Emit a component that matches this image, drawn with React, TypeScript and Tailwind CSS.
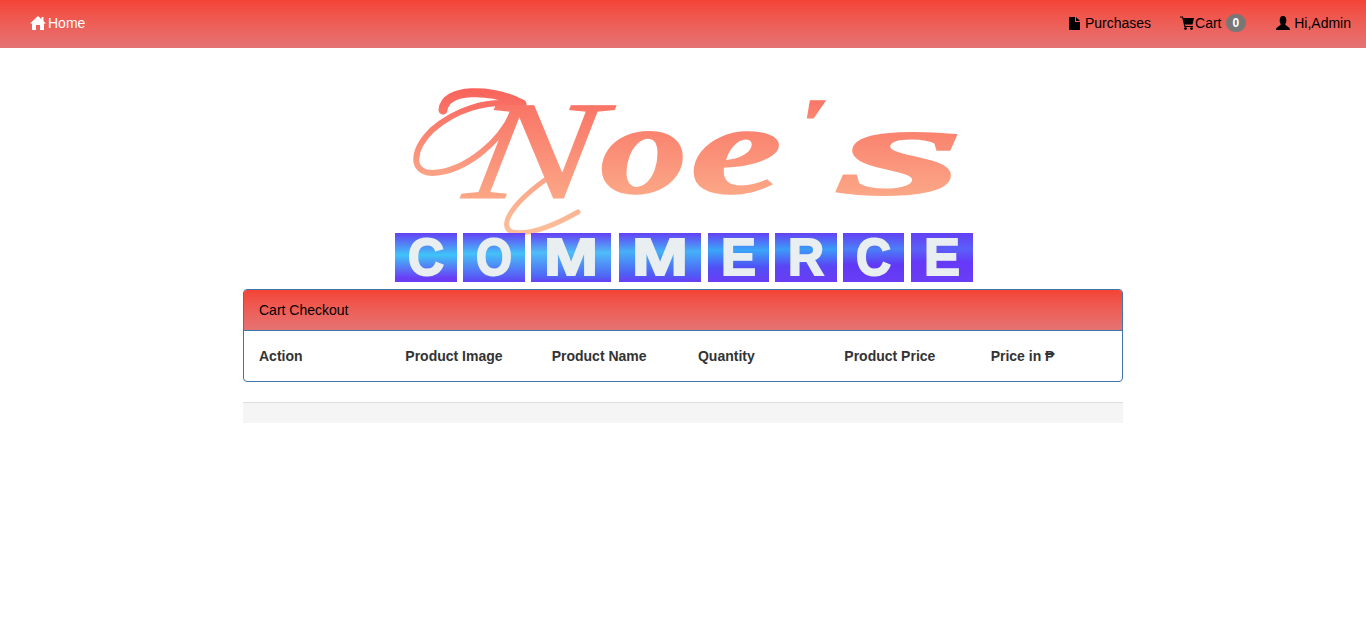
import React from "react";

const tiles = [
  { x: 395, w: 62, ch: "C", mid: "#3fc4f8", end: "#6a3df5", a: 0.45, b: 0.92 },
  { x: 463, w: 62, ch: "O", mid: "#45c0f8", end: "#5a50f5", a: 0.42, b: 0.95 },
  { x: 531, w: 80, ch: "M", mid: "#4fbdf8", end: "#4f62f5", a: 0.4, b: 0.9 },
  { x: 619, w: 82, ch: "M", mid: "#45b0f8", end: "#4f5cf5", a: 0.38, b: 0.85 },
  { x: 708, w: 61, ch: "E", mid: "#3aa6f8", end: "#5050f5", a: 0.35, b: 0.7 },
  { x: 775, w: 62, ch: "R", mid: "#3a9cf8", end: "#5a45f5", a: 0.33, b: 0.68 },
  { x: 843, w: 61, ch: "C", mid: "#4a80f8", end: "#6038f5", a: 0.33, b: 0.65 },
  { x: 911, w: 62, ch: "E", mid: "#5a60f8", end: "#6638f8", a: 0.33, b: 0.6 },
];

const Logo = () => (
  <svg viewBox="243 48 880 241" className="block w-[880px] h-[241px]">
    <defs>
      <linearGradient id="brush" x1="0" y1="0" x2="0" y2="1">
        <stop offset="0" stopColor="#f8645c" />
        <stop offset="1" stopColor="#fcb690" />
      </linearGradient>
      <linearGradient id="swash" gradientUnits="userSpaceOnUse" x1="0" y1="90" x2="0" y2="235">
        <stop offset="0" stopColor="#f8645c" />
        <stop offset="0.6" stopColor="#fba487" />
        <stop offset="1" stopColor="#fcc09a" />
      </linearGradient>
      {tiles.map((t, i) => (
        <linearGradient key={i} id={`tile${i}`} x1="0" y1="0" x2="0" y2="1">
          <stop offset="0" stopColor="#6440f5" />
          <stop offset={t.a} stopColor={t.mid} />
          <stop offset={t.b} stopColor={t.end} />
          <stop offset="1" stopColor="#6a3df5" />
        </linearGradient>
      ))}
    </defs>
    {/* flourishes around the script N */}
    <g fill="none" stroke="url(#swash)" strokeLinecap="round">
      <path d="M443 110C445 88 490 88 522 104" strokeWidth="9" />
      <path d="M516 104C505 140 465 172 432 173C410 172 412 150 432 130C455 110 485 100 516 104" strokeWidth="6" />
      <path d="M578 212C555 225 530 236 512 232C498 226 512 204 545 180" strokeWidth="5" />
    </g>
    <g fontFamily='"Liberation Serif", serif' fontStyle="italic" fontWeight="400" fill="url(#brush)" stroke="url(#brush)" strokeWidth="1.5">
      <text x="0" y="0" fontSize="176" transform="translate(462 198) skewX(-8) scale(1.12 0.8)">N</text>
      <text x="0" y="0" fontSize="130" fontWeight="700" transform="translate(600 193) scale(1.35 1)">o</text>
      <text x="0" y="0" fontSize="130" fontWeight="700" transform="translate(690 193) scale(1.6 1)">e</text>
      <text x="0" y="0" fontSize="72" fontWeight="700" transform="translate(788 148) skewX(-8) scale(1.6 1)">'</text>
      <text x="0" y="0" fontSize="130" fontWeight="700" transform="translate(839 194) scale(2.5 1)">s</text>
    </g>
    {tiles.map((t, i) => (
      <g key={i}>
        <rect x={t.x} y="233" width={t.w} height="49" fill={`url(#tile${i})`} />
        <text
          x={t.x + 13}
          y="275"
          textLength={t.w - 26}
          lengthAdjust="spacingAndGlyphs"
          fontSize="51"
          fontWeight="700"
          fontFamily='"Liberation Sans", sans-serif'
          fill="#e9eef0"
          stroke="#e9eef0"
          strokeWidth="2"
        >
          {t.ch}
        </text>
      </g>
    ))}
  </svg>
);

const HomeIcon = () => (
  <svg viewBox="0 0 16 14" className="mr-0.5 h-[14px] w-4 fill-current">
    <path d="M8 0 11.5 3.2V1H13.5V5L16 7.5H14V14H10V9H6V14H2V7.5H0Z" />
  </svg>
);

const FileIcon = () => (
  <svg viewBox="0 0 11 13" className="mr-[5px] h-[13px] w-[11px] fill-current">
    <path d="M0 0H6V5H11V13H0ZM7 0 11 4H7Z" />
  </svg>
);

const CartIcon = () => (
  <svg viewBox="0 0 14 14" className="mr-px h-[14px] w-[14px] fill-current">
    <path d="M0 .5H3L3.4 2H14L12.5 8.5H5L5.4 10H13V11H4.4L2.2 1.5H0Z" />
    <circle cx="5.5" cy="12.6" r="1.4" />
    <circle cx="11.5" cy="12.6" r="1.4" />
  </svg>
);

const UserIcon = () => (
  <svg viewBox="0 0 14 14" className="mr-1 h-[14px] w-[14px] fill-current">
    <ellipse cx="7" cy="4.4" rx="3.3" ry="4.4" />
    <path d="M0 14C0 10.5 4 10.5 5 8H9C10 10.5 14 10.5 14 14Z" />
  </svg>
);

const columns = ["Action", "Product Image", "Product Name", "Quantity", "Product Price", "Price in ₱"];

export default function App() {
  return (
    <div className="min-h-[638px] bg-white text-sm leading-5 font-['Liberation_Sans',Arial,sans-serif]">
      <nav className="flex h-12 items-center justify-between bg-gradient-to-b from-[#f44336] to-[#e57373] px-[15px] pb-0.5">
        <a className="flex items-center px-[15px] text-white">
          <HomeIcon />
          Home
        </a>
        <div className="flex items-center text-black">
          <a className="flex items-center pl-[15px] pr-[14px]">
            <FileIcon />
            Purchases
          </a>
          <a className="flex items-center px-[15px]">
            <CartIcon />
            Cart
            <span className="ml-1 rounded-[10px] bg-[#777] px-[7px] py-[3px] text-xs leading-3 font-bold text-white">0</span>
          </a>
          <a className="flex items-center pl-[15px]">
            <UserIcon />
            Hi,Admin
          </a>
        </div>
      </nav>

      <main className="mx-auto w-[880px]">
        <Logo />
        <section className="rounded border border-[#3f76a8]">
          <h2 className="rounded-t-[3px] border-b border-[#3f76a8] bg-gradient-to-b from-[#f44336] to-[#e57373] px-[15px] py-[10px] text-black">
            Cart Checkout
          </h2>
          <table className="w-full table-fixed">
            <thead>
              <tr>
                {columns.map((c) => (
                  <th key={c} className="px-[15px] py-[15px] text-left font-bold text-[#333]">
                    {c}
                  </th>
                ))}
              </tr>
            </thead>
          </table>
        </section>
        <footer className="mt-5 h-[21px] border-t border-[#ddd] bg-[#f5f5f5]" />
      </main>
    </div>
  );
}
